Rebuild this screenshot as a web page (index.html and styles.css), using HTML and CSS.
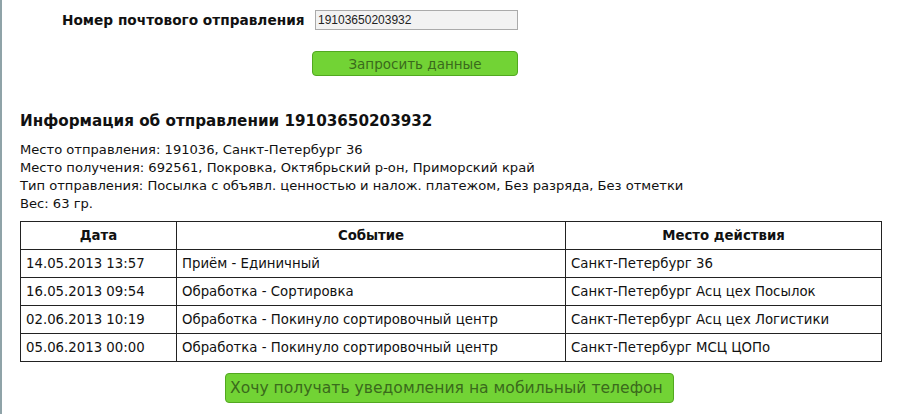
FILE: index.html
```html
<!DOCTYPE html>
<html lang="ru">
<head>
    <meta charset="UTF-8">
    <title>Отслеживание</title>
    <link rel="stylesheet" href="styles.css">
</head>
<body>
<div class="page">
    <form class="search">
        <div class="search-row">
            <label for="barcode" class="search-label">Номер почтового отправления</label>
            <input type="text" id="barcode" class="search-input" value="19103650203932">
        </div>
        <div class="search-row">
            <span class="search-spacer"></span>
            <button type="button" class="green-btn small">Запросить данные</button>
        </div>
    </form>

    <h3 class="info-title">Информация об отправлении 19103650203932</h3>
    <div class="info">
        Место отправления: 191036, Санкт-Петербург 36<br>
        Место получения: 692561, Покровка, Октябрьский р-он, Приморский край<br>
        Тип отправления: Посылка с объявл. ценностью и налож. платежом, Без разряда, Без отметки<br>
        Вес: 63 гр.
    </div>

    <table class="history">
        <thead>
            <tr>
                <th class="c-date">Дата</th>
                <th class="c-event">Событие</th>
                <th>Место действия</th>
            </tr>
        </thead>
        <tbody>
            <tr><td>14.05.2013 13:57</td><td>Приём - Единичный</td><td>Санкт-Петербург 36</td></tr>
            <tr><td>16.05.2013 09:54</td><td>Обработка - Сортировка</td><td>Санкт-Петербург Асц цех Посылок</td></tr>
            <tr><td>02.06.2013 10:19</td><td>Обработка - Покинуло сортировочный центр</td><td>Санкт-Петербург Асц цех Логистики</td></tr>
            <tr><td>05.06.2013 00:00</td><td>Обработка - Покинуло сортировочный центр</td><td>Санкт-Петербург МСЦ ЦОПо</td></tr>
        </tbody>
    </table>

    <div class="notify">
        <button type="button" class="green-btn big">Хочу получать уведомления на мобильный телефон</button>
    </div>
</div>
</body>
</html>
```

FILE: styles.css
```css
body {
    margin: 0;
    padding: 0;
    background: #fff;
    font-family: "DejaVu Sans", Tahoma, sans-serif;
    color: #111;
}

.page {
    border-left: 2px solid #8fa3a8;
    min-height: 414px;
    box-sizing: border-box;
    padding: 0 18px 0 18px;
}

.search {
    padding-top: 10px;
}

.search-row {
    display: flex;
    align-items: center;
    margin-bottom: 21px;
}

.search-label {
    width: 252px;
    padding-left: 42px;
    font-weight: bold;
    font-size: 13.7px;
    white-space: nowrap;
}

.search-spacer {
    width: 292px;
}

.search-input {
    width: 197px;
    height: 16px;
    margin: 0 0 0 1px;
    padding: 1px 2px;
    border: 1px solid #aaa;
    background: #f2f2f2;
    font-family: "Liberation Sans", Arial, sans-serif;
    font-size: 12px;
    color: #222;
}

.green-btn {
    background: #72d335;
    border: 1px solid #52a820;
    border-radius: 4px;
    color: #3a6a1c;
    font-family: "DejaVu Sans", Tahoma, sans-serif;
    cursor: pointer;
    white-space: nowrap;
}

.green-btn.small {
    width: 206px;
    height: 25px;
    font-size: 13.5px;
}

.green-btn.big {
    width: 449px;
    height: 30px;
    font-size: 15.6px;
    padding: 0 4px;
    text-align: left;
}

.info-title {
    font-size: 15.2px;
    margin: 36px 0 11px;
}

.info {
    font-size: 13.1px;
    line-height: 18px;
}

.history {
    width: 862px;
    margin-top: 8px;
    border-collapse: collapse;
    font-size: 13.3px;
}

.history th,
.history td {
    border: 1px solid #222;
    height: 28px;
    box-sizing: border-box;
    padding: 0 5px;
    text-align: left;
}

.history th {
    text-align: center;
}

.c-date {
    width: 156px;
}

.c-event {
    width: 389px;
}

.notify {
    display: flex;
    justify-content: center;
    margin-top: 11px;
    padding-right: 3px;
}
```
